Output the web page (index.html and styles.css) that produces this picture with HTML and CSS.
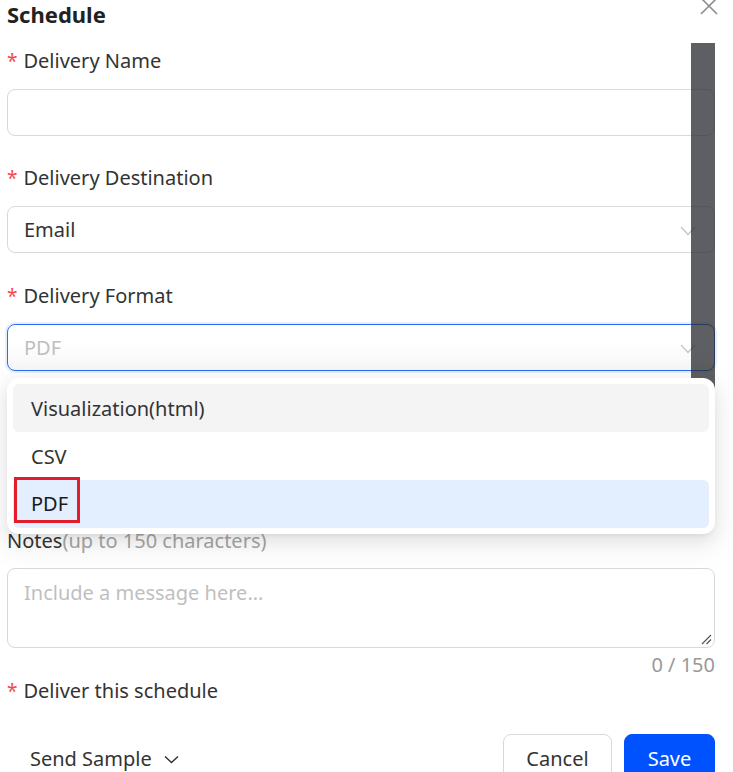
FILE: index.html
```html
<!DOCTYPE html>
<html>
<head>
<meta charset="utf-8">
<link rel="stylesheet" href="styles.css">
</head>
<body>
<div class="panel">
  <div class="header">
    <h1 class="title">Schedule</h1>
    <svg class="close" width="18" height="18" viewBox="0 0 18 18"><path d="M1 -2 L17 14 M17 -2 L1 14" stroke="#8c8c8c" stroke-width="1.6" fill="none"/></svg>
  </div>

  <div class="field">
    <label class="label"><span class="req">*</span>Delivery Name</label>
    <div class="input"></div>
  </div>

  <div class="field">
    <label class="label"><span class="req">*</span>Delivery Destination</label>
    <div class="input select"><span class="value">Email</span>
      <svg class="chev" width="16" height="10" viewBox="0 0 16 10"><path d="M1 1 L8 8.5 L15 1" stroke="#c4c4c4" stroke-width="1.3" fill="none"/></svg>
    </div>
  </div>

  <div class="field">
    <label class="label"><span class="req">*</span>Delivery Format</label>
    <div class="select-wrap">
      <div class="input select focused"><span class="placeholder">PDF</span>
        <svg class="chev" width="16" height="10" viewBox="0 0 16 10"><path d="M1 1 L8 8.5 L15 1" stroke="#c4c4c4" stroke-width="1.3" fill="none"/></svg>
      </div>
      <div class="menu">
        <div class="opt hover">Visualization(html)</div>
        <div class="opt">CSV</div>
        <div class="opt selected"><span class="mark">PDF</span></div>
      </div>
    </div>
  </div>

  <div class="field notes">
    <label class="label">Notes<span class="hint">(up to 150 characters)</span></label>
    <div class="textarea"><span class="placeholder">Include a message here...</span>
      <svg class="grip" width="12" height="12" viewBox="0 0 12 12"><path d="M11 2 L2 11 M11 6.5 L6.5 11" stroke="#555" stroke-width="1.2" fill="none"/></svg>
    </div>
    <div class="count">0 / 150</div>
  </div>

  <div class="field">
    <label class="label last"><span class="req">*</span>Deliver this schedule</label>
  </div>

  <div class="footer">
    <div class="sample">Send Sample
      <svg width="15" height="9" viewBox="0 0 15 9"><path d="M1 1.5 L7.5 7.5 L14 1.5" stroke="#333" stroke-width="1.5" fill="none"/></svg>
    </div>
    <div class="actions">
      <button class="btn cancel">Cancel</button>
      <button class="btn save">Save</button>
    </div>
  </div>

  <div class="scrollbar"></div>
</div>
</body>
</html>
```

FILE: styles.css
```css
* { box-sizing: border-box; }
html, body { margin: 0; padding: 0; background: #fff; }
body {
  font-family: "Noto Sans", "Open Sans", "DejaVu Sans", sans-serif;
  color: #333;
  width: 733px;
  height: 772px;
  overflow: hidden;
}
.panel {
  position: relative;
  padding: 0 18px 0 7px;
  height: 772px;
}
.header {
  display: flex;
  justify-content: space-between;
  align-items: flex-start;
  height: 47px;
}
.title {
  margin: 0;
  font-size: 22px;
  font-weight: 700;
  line-height: 28px;
  color: #222;
}
.close { margin-right: -3px; }

.field { display: flex; flex-direction: column; }
.label {
  font-size: 20px;
  line-height: 28px;
  color: #333;
  margin-bottom: 14px;
}
.label.last { margin-bottom: 0; }
.req {
  color: #f5474b;
  font-size: 19px;
  margin-right: 6px;
}
.input {
  height: 47px;
  border: 1px solid #d9d9d9;
  border-radius: 8px;
  margin-bottom: 28px;
  background: #fff;
}
.select {
  display: flex;
  align-items: center;
  justify-content: space-between;
  padding: 0 18px 0 16px;
  font-size: 20px;
  margin-bottom: 29px;
}
.value { color: #333; }
.placeholder { color: #bfbfbf; }
.chev { margin-top: 2px; }

.select-wrap { position: relative; }
.focused {
  border-color: #2f6bef;
  box-shadow: 0 0 0 2px #e7effd;
  background: linear-gradient(#fff 40%, #f6f6f6);
}
.menu {
  position: absolute;
  left: 0;
  right: 0;
  top: 54px;
  background: #fff;
  border-radius: 12px;
  padding: 6px;
  box-shadow: 0 6px 16px rgba(0,0,0,0.08), 0 3px 6px -4px rgba(0,0,0,0.12), 0 9px 28px 8px rgba(0,0,0,0.05);
  z-index: 5;
}
.opt {
  height: 48px;
  display: flex;
  align-items: center;
  padding: 0 18px;
  font-size: 20px;
  color: #333;
  border-radius: 6px;
}
.opt.hover { background: #f4f4f4; }
.opt.selected { background: #e3efff; color: #1a1a1a; }
.mark {
  position: relative;
  display: inline-block;
  line-height: 28px;
}
.mark::after {
  content: "";
  position: absolute;
  left: -17px;
  right: -12px;
  top: -13px;
  bottom: -5px;
  border: 3px solid #e21c2a;
}

.notes .label { margin-top: 127px; margin-bottom: 13px; }
.hint { color: #a6a6a6; }
.textarea {
  position: relative;
  height: 80px;
  border: 1px solid #d9d9d9;
  border-radius: 8px;
  padding: 10px 16px;
  font-size: 20px;
  line-height: 28px;
}
.grip { position: absolute; right: 2px; bottom: 2px; }
.count {
  text-align: right;
  color: #999;
  font-size: 20px;
  line-height: 24px;
  margin-top: 5px;
}

.footer {
  display: flex;
  justify-content: space-between;
  align-items: flex-start;
  margin-top: 29px;
}
.sample {
  display: flex;
  align-items: center;
  gap: 12px;
  margin: 12px 0 0 23px;
  font-size: 20px;
  line-height: 26px;
  color: #333;
}
.actions { display: flex; gap: 12px; }
.btn {
  font-family: inherit;
  font-size: 20px;
  height: 48px;
  border-radius: 8px;
  padding: 0;
  cursor: pointer;
}
.cancel { background: #fff; border: 1px solid #d9d9d9; color: #333; width: 109px; }
.save { background: #0052ff; border: 1px solid #0052ff; color: #fff; width: 91px; }

.scrollbar {
  position: absolute;
  left: 691px;
  top: 43px;
  width: 24px;
  height: 400px;
  background: rgba(40, 42, 46, 0.75);
  z-index: 3;
}
```
